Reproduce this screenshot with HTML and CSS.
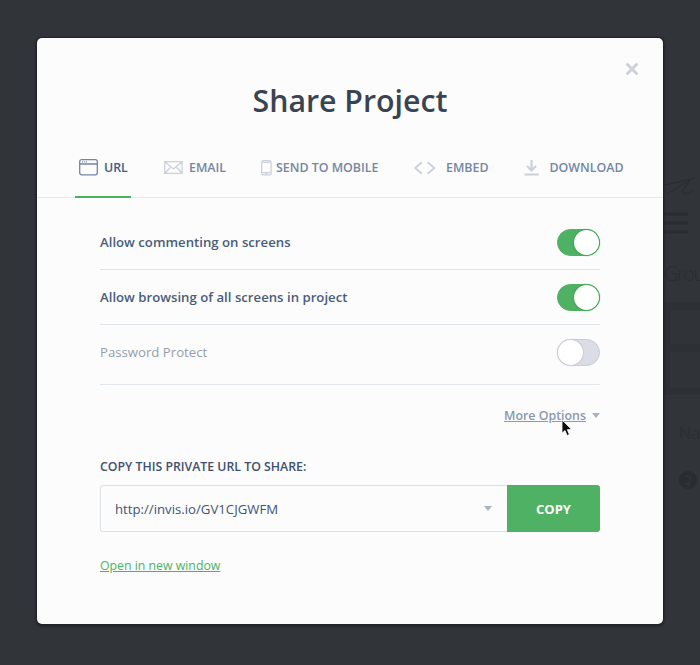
FILE: index.html
```
<!DOCTYPE html>
<html lang="en">
<head>
<meta charset="utf-8">
<title>Share Project</title>
<link rel="stylesheet" href="styles.css">
</head>
<body>
<aside class="backdrop" aria-hidden="true">
  <svg class="backdrop-art" width="36" height="400" viewBox="0 0 36 400">
    <g fill="none" stroke="#292c30" stroke-width="1">
      <path d="M1 31 Q14 28 31 24 M3 40 L26 26 L18 38 Q22 42 29 36"/>
      <path d="M0 60H24M0 69H24M0 78H24" stroke-width="3"/>
    </g>
    <path d="M0 148H36V241H0Z" fill="#2d3035"/>
    <path d="M7 156H36V190H7ZM6 198H36V234H6Z" fill="#303338"/>
    <circle cx="24" cy="326" r="9" fill="#292c30"/>
    <path d="M21 322l5 1-1 8-4-2" fill="none" stroke="#313439" stroke-width="1.5"/>
  </svg>
  <span class="ghost ghost-group">Grou</span>
  <span class="ghost ghost-name">Na</span>
</aside>
<main class="modal">
  <button class="close" aria-label="Close"><svg width="14" height="14" viewBox="0 0 14 14"><path d="M2.5 2.5l9 9M11.5 2.5l-9 9"/></svg></button>
  <h1 class="title">Share Project</h1>
  <nav class="tabs">
    <a class="tab tab-url active"><svg width="19" height="17" viewBox="0 0 19 17"><rect x=".7" y=".7" width="17.6" height="15.1" rx="2"/><path d="M1 5h17M3 2.8h1M5 2.8h1M7 2.8h1"/></svg><span>URL</span></a>
    <a class="tab tab-email"><svg width="19" height="13" viewBox="0 0 19 13"><path d="M.6.6h17.5v11.8H.6zM.8.8l8.6 7.1L18 .8M.8 12.2l5.3-5.7M18 12.2l-5.3-5.7"/></svg><span>EMAIL</span></a>
    <a class="tab tab-mobile"><svg width="11" height="16" viewBox="0 0 11 16"><rect x=".7" y=".7" width="9.4" height="14.2" rx="1.5"/><path d="M1.6 2.3h7.6M1.6 12.6h7.6M4.7 14h1.4"/></svg><span>SEND TO MOBILE</span></a>
    <a class="tab tab-embed"><svg width="22" height="14" viewBox="0 0 22 14"><path d="M7.8 1.2L1.2 7l6.6 5.8M13.7 1.2L20.3 7l-6.6 5.8"/></svg><span>EMBED</span></a>
    <a class="tab tab-download"><svg width="16" height="16" viewBox="0 0 16 16"><path d="M7.5 0v10M3 6l4.5 4.5L12 6M.3 14.5h14.5"/></svg><span>DOWNLOAD</span></a>
  </nav>
  <section class="content">
    <div class="option"><span>Allow commenting on screens</span><i class="switch on"></i></div>
    <div class="option"><span>Allow browsing of all screens in project</span><i class="switch on"></i></div>
    <div class="option last"><span>Password Protect</span><i class="switch"></i></div>
    <div class="more"><a>More Options</a><i class="caret"></i>
      <svg class="cursor" width="12" height="19" viewBox="0 0 12 19"><path d="M1 1v13.2l3-2.7 2.1 5 2.3-1-2.1-4.8 4.3-.3z"/></svg>
    </div>
    <h2 class="label">COPY THIS PRIVATE URL TO SHARE:</h2>
    <div class="share">
      <div class="url"><span>http://invis.io/GV1CJGWFM</span><i class="caret"></i></div>
      <button class="copy">COPY</button>
    </div>
    <a class="open">Open in new window</a>
  </section>
</main>
</body>
</html>
```
FILE: styles.css
```
* { box-sizing: border-box; }
body {
  margin: 0;
  width: 700px;
  height: 665px;
  overflow: hidden;
  padding: 38px 37px 41px;
  background: #313439;
  font-family: "Open Sans", "Noto Sans", sans-serif;
  font-size: 13.2px;
}
button { border: 0; padding: 0; background: none; font: inherit; }
.backdrop { position: absolute; left: 664px; top: 154px; width: 36px; height: 400px; overflow: hidden; }
.backdrop-art { display: block; }
.ghost { position: absolute; color: #2a2d31; font-weight: 300; white-space: nowrap; }
.ghost-group { left: 0; top: 106px; font-size: 20px; letter-spacing: -1.5px; }
.ghost-name { left: 15px; top: 267px; font-size: 17px; }
.modal {
  position: relative;
  height: 586px;
  background: #fcfcfd;
  border-radius: 5px;
  box-shadow: 0 0 0 1px #202429, 0 1px 3px 1px #1b1e22;
}
.close { position: absolute; left: 588px; top: 24px; width: 14px; height: 14px; }
.close svg { display: block; fill: none; stroke: #cfd1da; stroke-width: 3; stroke-linecap: round; }
.title {
  margin: 0;
  padding-top: 42px;
  height: 103px;
  font-size: 30.3px;
  line-height: 42px;
  font-weight: 600;
  text-align: center;
  color: #3a4350;
}
.tabs { display: flex; height: 57px; padding-left: 38px; border-bottom: 1px solid #e8e8f0; }
.tab { display: flex; align-items: center; height: 57px; padding-bottom: 4px; font-size: 12.4px; font-weight: 600; color: #7486a2; white-space: nowrap; }
.tab svg { flex: none; fill: none; stroke: #cbd0dc; stroke-width: 1.3; }
.tab-url { width: 56px; padding: 0 0 2px 4px; gap: 6px; margin-right: 33px; border-bottom: 2px solid #46b160; color: #405b83; }
.tab-url svg { stroke: #7486a2; }
.tab-email { width: 97px; gap: 6px; }
.tab-mobile { width: 153px; gap: 4px; }
.tab-embed { width: 110px; gap: 10px; }
.tab-embed svg { stroke-width: 1.8; }
.tab-download { gap: 9.5px; }
.tab-download svg { stroke-width: 2.2; }
.content { padding: 17px 63px 0; }
.option { display: flex; align-items: center; justify-content: space-between; height: 55px; border-bottom: 1px solid #dfe5ea; color: #4a5c79; font-weight: 600; }
.option.last { height: 60px; padding-bottom: 5px; color: #949dac; font-weight: 400; }
.switch { width: 43px; height: 27px; padding: 1px; border-radius: 14px; border: 1px solid #c9ccd6; background: #dadde5; display: flex; align-items: center; }
.switch::before { content: ""; width: 25px; height: 25px; border-radius: 50%; background: #fff; margin-left: -1px; box-shadow: 0 0 1px 1px #c9ccd6; flex: none; }
.switch.on { background: #4eb163; border-color: #4eb163; justify-content: flex-end; }
.switch.on::before { margin: 0 -1px 0 0; box-shadow: 0 0 1px 1px #3fa455; }
.more { position: relative; display: flex; justify-content: flex-end; align-items: center; height: 63px; padding-bottom: 2px; color: #8b98af; font-size: 12.4px; font-weight: 600; }
.more a { text-decoration: underline; }
.caret { width: 0; height: 0; border: 4px solid transparent; border-top: 5px solid #aab3c2; border-bottom: 0; }
.more .caret { margin-left: 6px; }
.cursor { position: absolute; left: 461px; top: 34px; fill: #090a0c; stroke: #fff; stroke-width: .8; }
.label { margin: 0; padding-top: 10px; height: 37px; line-height: 18px; font-size: 12.3px; font-weight: 600; color: #40506d; }
.share { display: flex; height: 47px; }
.url { display: flex; align-items: center; justify-content: space-between; width: 407px; padding: 0 15px 0 14px; border: 1px solid #dbe2e7; border-right: 0; border-radius: 3px 0 0 3px; color: #405375; }
.copy { width: 93px; border-radius: 0 3px 3px 0; background: #4eb163; color: #fff; font-weight: 700; font-size: 13px; }
.open { display: inline-block; margin-top: 24px; line-height: 20px; font-size: 12.3px; color: #4bb463; text-decoration: underline; }
```
